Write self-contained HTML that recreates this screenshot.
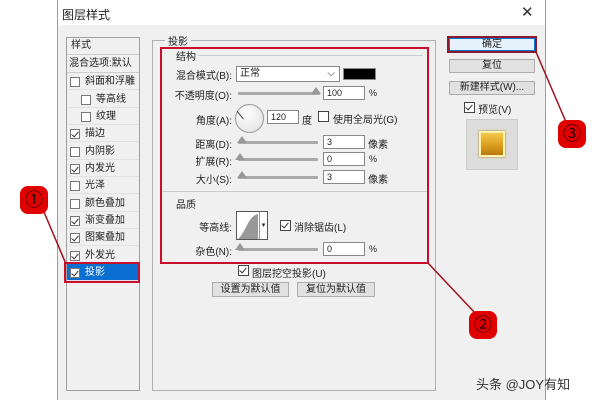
<!DOCTYPE html>
<html><head><meta charset="utf-8"><style>
*{margin:0;padding:0;box-sizing:border-box}
body{width:600px;height:400px;background:#fff;position:relative;overflow:hidden;font-family:"Liberation Sans","Noto Sans CJK SC",sans-serif;font-size:10px;color:#222}
.a{position:absolute}
.dlg{left:57px;top:0;width:489px;height:400px;background:#f0f0f0;border-left:1px solid #7aa7cf;border-right:1px solid #7aa7cf}
.title{left:58px;top:0;width:487px;height:25px;background:#fff}
.cb{position:absolute;width:10px;height:10px;border:1px solid #444;background:#fff;overflow:hidden}
.ck::after{content:"";position:absolute;left:2px;top:0px;width:3px;height:6px;border:solid #333;border-width:0 1.3px 1.3px 0;transform:rotate(40deg)}
.row{position:absolute;left:67px;width:72px;height:17px;border-bottom:1px solid #e2e2e2;line-height:17px;padding-left:18px;font-size:10px}
.row .cb{left:3px;top:4px;border-color:#777}
.lbl{position:absolute;text-align:right;width:80px;font-size:10px}
.inp{position:absolute;background:#fff;border:1px solid #888;height:14px;font-size:9px;line-height:12px;padding-left:3px}
.trk{position:absolute;height:3px;background:#aaa;border-radius:1px}
.thumb{position:absolute;width:0;height:0;border-left:5px solid transparent;border-right:5px solid transparent;border-bottom:7px solid #999}
.btn{position:absolute;background:#e1e1e1;border:1px solid #adadad;text-align:center;font-size:10px;line-height:13px}
.circ{position:absolute;width:28px;height:28px;border-radius:8px;background:#e00000;color:#200;text-align:center;line-height:28px;font-size:18px}
</style></head><body>
<div class="a dlg"></div>
<div class="a title"></div>
<div class="a" style="left:62px;top:6px;font-size:12px">图层样式</div>
<div class="a" style="left:521px;top:3px;font-size:15px;color:#333">✕</div>

<div class="a" style="left:66px;top:37px;width:74px;height:354px;border:1px solid #a0a0a0;background:#f0f0f0"></div>
<div class="a" style="left:67px;top:38px;width:72px;height:17px;border-bottom:1px solid #ccc;padding-left:4px;line-height:16px">样式</div>
<div class="a" style="left:67px;top:55px;width:72px;height:18px;border-bottom:1px solid #ccc;padding-left:2px;line-height:18px;font-size:10px">混合选项:默认</div>
<div class="row" style="top:73px"><span class="cb"></span>斜面和浮雕</div>
<div class="row" style="top:91px;padding-left:29px"><span class="cb" style="left:14px"></span>等高线</div>
<div class="row" style="top:108px;padding-left:29px"><span class="cb" style="left:14px"></span>纹理</div>
<div class="row" style="top:125px"><span class="cb ck"></span>描边</div>
<div class="row" style="top:143px"><span class="cb"></span>内阴影</div>
<div class="row" style="top:160px"><span class="cb ck"></span>内发光</div>
<div class="row" style="top:177px"><span class="cb"></span>光泽</div>
<div class="row" style="top:195px"><span class="cb"></span>颜色叠加</div>
<div class="row" style="top:212px"><span class="cb ck"></span>渐变叠加</div>
<div class="row" style="top:229px"><span class="cb ck"></span>图案叠加</div>
<div class="row" style="top:247px"><span class="cb ck"></span>外发光</div>
<div class="row" style="top:264px;background:#0a6fd1;color:#fff"><span class="cb ck"></span>投影</div>
<div class="a" style="left:64px;top:262px;width:76px;height:21px;border:2px solid #c8102e"></div>

<div class="a" style="left:152px;top:40px;width:284px;height:351px;border:1px solid #b0b0b0"></div>
<div class="a" style="left:165px;top:33px;background:#f0f0f0;padding:0 3px;font-size:10px">投影</div>
<div class="a" style="left:160px;top:47px;width:269px;height:217px;border:2px solid #c8102e"></div>
<div class="a" style="left:176px;top:48px;font-size:10px">结构</div>
<div class="a" style="left:198px;top:55px;width:225px;height:1px;background:#ccc"></div>

<div class="lbl" style="left:152px;top:67px">混合模式(B):</div>
<div class="inp" style="left:236px;top:66px;width:104px;height:16px;font-size:10px;line-height:14px">正常<span style="position:absolute;right:4px;top:0">⌵</span></div>
<div class="a" style="left:343px;top:68px;width:33px;height:12px;background:#000;border:1px solid #888"></div>

<div class="lbl" style="left:152px;top:87px">不透明度(O):</div>
<div class="trk" style="left:238px;top:92px;width:82px"></div>
<div class="thumb" style="left:311px;top:87px"></div>
<div class="inp" style="left:323px;top:86px;width:42px">100</div>
<div class="a" style="left:369px;top:88px;font-size:9px">%</div>

<div class="lbl" style="left:152px;top:112px">角度(A):</div>
<div class="a" style="left:235px;top:104px;width:29px;height:29px;border-radius:50%;border:1px solid #999;background:radial-gradient(circle at 40% 35%,#fff,#ddd)"></div>
<div class="a" style="left:243px;top:109px;width:1px;height:10px;background:#444;transform:rotate(-40deg);transform-origin:bottom"></div>
<div class="inp" style="left:267px;top:110px;width:32px">120</div>
<div class="a" style="left:302px;top:112px">度</div>
<div class="cb" style="left:318px;top:111px;width:11px;height:11px"></div>
<div class="a" style="left:333px;top:111px">使用全局光(G)</div>

<div class="lbl" style="left:152px;top:136px">距离(D):</div>
<div class="trk" style="left:238px;top:141px;width:80px"></div><div class="thumb" style="left:237px;top:136px"></div>
<div class="inp" style="left:323px;top:135px;width:42px">3</div><div class="a" style="left:368px;top:136px">像素</div>
<div class="lbl" style="left:152px;top:153px">扩展(R):</div>
<div class="trk" style="left:238px;top:158px;width:80px"></div><div class="thumb" style="left:235px;top:153px"></div>
<div class="inp" style="left:323px;top:152px;width:42px">0</div><div class="a" style="left:369px;top:154px;font-size:9px">%</div>
<div class="lbl" style="left:152px;top:171px">大小(S):</div>
<div class="trk" style="left:238px;top:176px;width:80px"></div><div class="thumb" style="left:237px;top:171px"></div>
<div class="inp" style="left:323px;top:170px;width:42px">3</div><div class="a" style="left:368px;top:171px">像素</div>

<div class="a" style="left:162px;top:191px;width:265px;height:1px;background:#ccc"></div>
<div class="a" style="left:174px;top:196px;background:#f0f0f0;padding:0 2px">品质</div>

<div class="lbl" style="left:152px;top:219px">等高线:</div>
<div class="a" style="left:236px;top:211px;width:32px;height:29px;border:1px solid #555;background:#fff">
<svg width="22" height="27" style="position:absolute;left:1px;top:0"><path d="M0 27 C8 20 10 4 20 2 L20 27Z" fill="#999"/></svg>
<div style="position:absolute;right:0;top:0;width:8px;height:27px;border-left:1px solid #999;font-size:7px;line-height:27px;text-align:center">▾</div></div>
<div class="cb ck" style="left:280px;top:220px;width:11px;height:11px"></div>
<div class="a" style="left:294px;top:219px">消除锯齿(L)</div>

<div class="lbl" style="left:152px;top:243px">杂色(N):</div>
<div class="trk" style="left:238px;top:248px;width:80px"></div><div class="thumb" style="left:235px;top:243px"></div>
<div class="inp" style="left:323px;top:242px;width:42px">0</div><div class="a" style="left:369px;top:244px;font-size:9px">%</div>

<div class="cb ck" style="left:238px;top:265px;width:11px;height:11px"></div>
<div class="a" style="left:252px;top:265px">图层挖空投影(U)</div>
<div class="btn" style="left:212px;top:282px;width:77px;height:15px">设置为默认值</div>
<div class="btn" style="left:297px;top:282px;width:78px;height:15px">复位为默认值</div>

<div class="btn" style="left:449px;top:38px;width:86px;height:13px;line-height:11px;background:#e5f1fb;border-color:#0078d7">确定</div>
<div class="a" style="left:447px;top:36px;width:90px;height:17px;border:2px solid #8b1a2c"></div>
<div class="btn" style="left:449px;top:59px;width:86px;height:14px;line-height:12px">复位</div>
<div class="btn" style="left:449px;top:81px;width:86px;height:14px;line-height:12px">新建样式(W)...</div>
<div class="cb ck" style="left:464px;top:102px;width:11px;height:11px"></div>
<div class="a" style="left:478px;top:101px">预览(V)</div>
<div class="a" style="left:466px;top:119px;width:52px;height:51px;background:#ddd;border:1px solid #ccc"></div>
<div class="a" style="left:479px;top:131px;width:26px;height:26px;background:linear-gradient(#f3c84a,#d89a1a 60%,#b8780e);border:2px solid #fff3b0;box-shadow:0 0 2px #a07010"></div>

<svg class="a" style="left:0;top:0" width="600" height="400">
<line x1="44" y1="212" x2="66" y2="264" stroke="#a0101e" stroke-width="1.5"/>
<line x1="536" y1="52" x2="566" y2="122" stroke="#a0101e" stroke-width="1.5"/>
<line x1="428" y1="263" x2="476" y2="314" stroke="#a0101e" stroke-width="1.5"/>
</svg>
<div class="circ" style="left:20px;top:186px">①</div>
<div class="circ" style="left:558px;top:120px">③</div>
<div class="circ" style="left:469px;top:311px">②</div>
<div class="a" style="left:476px;top:374px;font-size:13px;color:#333">头条 @JOY有知</div>
</body></html>
